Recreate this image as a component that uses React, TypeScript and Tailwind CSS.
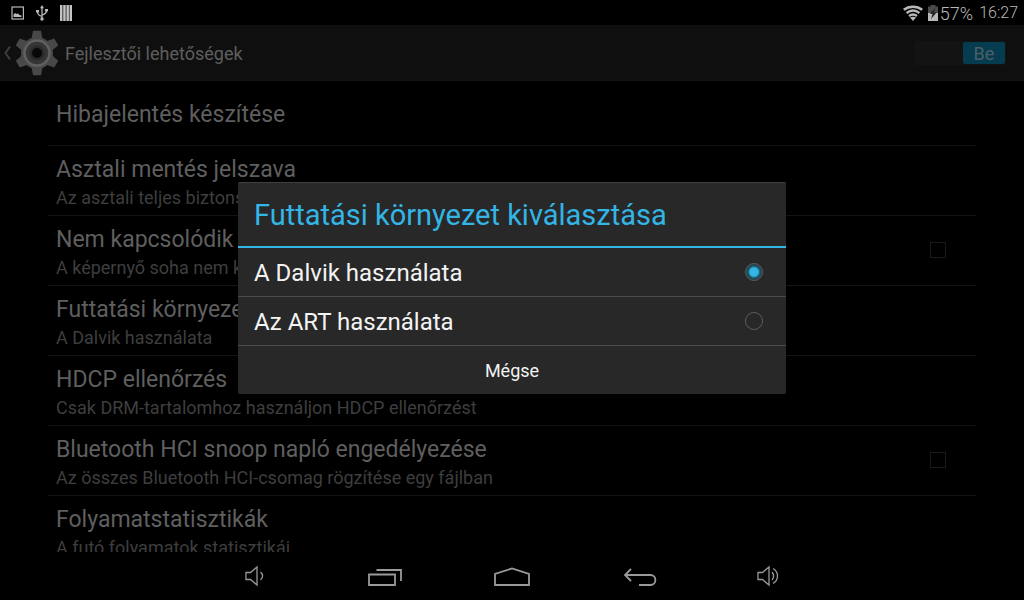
import React, { useState } from "react";

type Setting = { title: string; summary?: string; checkbox?: boolean };

const settings: Setting[] = [
  { title: "Hibajelentés készítése" },
  { title: "Asztali mentés jelszava", summary: "Az asztali teljes biztonsági mentések jelenleg nem védettek" },
  { title: "Nem kapcsolódik ki", summary: "A képernyő soha nem kapcsol ki töltés közben", checkbox: true },
  { title: "Futtatási környezet kiválasztása", summary: "A Dalvik használata" },
  { title: "HDCP ellenőrzés", summary: "Csak DRM-tartalomhoz használjon HDCP ellenőrzést" },
  { title: "Bluetooth HCI snoop napló engedélyezése", summary: "Az összes Bluetooth HCI-csomag rögzítése egy fájlban", checkbox: true },
  { title: "Folyamatstatisztikák", summary: "A futó folyamatok statisztikái" },
];

const runtimes = ["A Dalvik használata", "Az ART használata"];

function StatusBar() {
  return (
    <div className="flex h-[25px] shrink-0 items-center justify-between bg-black pl-[11px] pr-[6px] text-[#b8b8b8]">
      <div className="flex items-center gap-3">
        <svg width="13" height="14" viewBox="0 0 13 14" aria-hidden="true">
          <rect x="1" y="1" width="11.400" height="12" fill="none" stroke="currentColor" strokeWidth="1.200" />
          <path d="M2.500 11V8.500L4 7l1.500 1L7 7.500 8.500 9l2 .5V11z" fill="currentColor" />
        </svg>
        <svg width="12" height="16" viewBox="0 0 12 16" fill="none" stroke="currentColor" strokeWidth="1.300" aria-hidden="true">
          <path d="M6 2v12M6 11.500C2.500 10.500 1.500 9.500 1.500 6.500M6 10c3-.8 4.500-1.500 4.500-4.500" />
          <path d="M6 0L8 3.200H4zM0 5h3v2.500H0zM9 4h3v2.500H9z" fill="currentColor" stroke="none" />
          <circle cx="6" cy="14" r="1.700" fill="currentColor" stroke="none" />
        </svg>
        <svg width="12" height="16" viewBox="0 0 12 16" fill="#c4c4c4" aria-hidden="true">
          <path d="M0 0h2.500v16H0zM3.200 0h2.500v16H3.200zM6.400 0h2.500v16H6.400zM9.500 0H12v16H9.500z" />
        </svg>
      </div>
      <div className="flex items-center">
        <svg width="20" height="16" viewBox="0 0 20 16" fill="none" stroke="currentColor" aria-hidden="true">
          <path d="M.8 4.800C6 .6 14 .6 19.200 4.800" strokeWidth="2.500" />
          <path d="M3.600 8C7.500 5 12.500 5 16.400 8" strokeWidth="2.400" />
          <path d="M6 11c2.400-1.800 5.600-1.800 8 0" strokeWidth="2.300" />
          <path d="M10 16l-3-3.400c1.800-1.300 4.200-1.300 6 0z" fill="currentColor" stroke="none" />
        </svg>
        <svg className="ml-1" width="12" height="16" viewBox="0 0 12 16" aria-hidden="true">
          <path d="M3.500 0h5v1.500H11V8H1V1.500h2.500z" fill="#4a4a4a" />
          <path d="M1 8h10v8H1z" fill="#b8b8b8" />
          <path d="M8.500 2.500L3 9h2.500L4 14l5.500-6.500H6.800z" fill="#222" />
        </svg>
        <span className="ml-px pt-0.5 text-lg font-light leading-6">57%</span>
        <span className="ml-[6px] text-base font-light leading-6">16:27</span>
      </div>
    </div>
  );
}

const teeth = [0, 60, 120, 180, 240, 300];

function GearIcon() {
  return (
    <svg width="44" height="46" viewBox="0 0 44 46" aria-hidden="true">
      <g fill="#484848">
        {teeth.map((angle) => (
          <path key={angle} d="M18 .8h8l1.500 8.200h-11z" transform={`rotate(${angle} 22 23)`} />
        ))}
        <circle cx="22" cy="23" r="16" />
      </g>
      <circle cx="22" cy="23" r="12.500" fill="#353535" stroke="#606060" strokeWidth="2.500" />
      <circle cx="22" cy="23" r="7.500" fill="#2a2a2a" />
      <circle cx="22" cy="23" r="5" fill="#080808" />
    </svg>
  );
}

function Header() {
  return (
    <header className="flex h-14 shrink-0 items-center border-b border-[#121212] bg-[#0f0f0f] pl-1 pr-[18px]">
      <button type="button" aria-label="Vissza" className="flex items-center gap-1">
        <svg width="7" height="14" viewBox="0 0 7 14" fill="none" stroke="#3c3c3c" strokeWidth="2" aria-hidden="true">
          <path d="M6 .5L1.500 7 6 13.500" />
        </svg>
        <GearIcon />
      </button>
      <h1 className="ml-[6px] flex-1 pt-0.5 text-lg leading-6 text-[#5e5e5e]">Fejlesztői lehetőségek</h1>
      <button type="button" role="switch" aria-checked="true" aria-label="Fejlesztői lehetőségek" className="flex h-6 w-[92px] justify-end bg-[#131313] p-px">
        <span className="h-[22px] w-[42px] rounded-[2px] bg-[#053c50] text-center text-lg leading-6 text-[#4c5f66]">Be</span>
      </button>
    </header>
  );
}

function SettingRow({ title, summary, checkbox }: Setting) {
  const text = (
    <span className="block min-w-0 flex-1 pb-[5px] pt-2">
      <span className="block truncate text-[23px] leading-8 text-[#5f5f5f]">{title}</span>
      {summary && <span className="block truncate text-lg leading-6 text-[#3e3e3e]">{summary}</span>}
    </span>
  );
  if (checkbox) {
    return (
      <label className="flex h-[70px] items-center border-b border-[#141414] pl-2 pr-[30px]">
        {text}
        <input type="checkbox" className="mb-0.5 size-4 appearance-none border border-[#191919]" />
      </label>
    );
  }
  return (
    <button
      type="button"
      className={`flex w-full items-center border-b border-[#141414] px-2 text-left ${summary ? "h-[70px]" : "h-[65px]"}`}
    >
      {text}
    </button>
  );
}

function RuntimeDialog() {
  const [selected, setSelected] = useState(0);
  return (
    <div className="absolute inset-x-0 bottom-[49px] top-[25px] flex items-center justify-center">
      <div role="dialog" aria-labelledby="dialog-title" className="w-[548px] max-w-full rounded-[2px] bg-[#282828] text-[#f3f3f3]">
        <h2 id="dialog-title" className="flex h-[66px] items-center rounded-t-[2px] border-b-2 border-t border-b-[#33b5e5] border-t-[#404040] px-4 text-[29px] leading-10 text-[#33b5e5]">
          Futtatási környezet kiválasztása
        </h2>
        {runtimes.map((name, index) => (
          <label key={name} className="flex h-[49px] items-center justify-between border-b border-[#4c4c4c] pl-4 pr-[23px] text-2xl leading-8">
            <span className="pt-0.5">{name}</span>
            <input
              type="radio"
              name="runtime"
              checked={selected === index}
              onChange={() => setSelected(index)}
              className="size-[18px] appearance-none rounded-full border border-[#5c5c5c] checked:bg-[radial-gradient(circle,#33b5e5_0_4px,#1b5468_6px,#243c45_8px,#282828_9px)]"
            />
          </label>
        ))}
        <button type="button" className="h-12 w-full pt-0.5 text-lg leading-6">Mégse</button>
      </div>
    </div>
  );
}

function NavBar() {
  const button = "flex h-12 w-32 items-center justify-center";
  return (
    <nav className="flex h-12 shrink-0 items-center justify-center bg-black text-[#9a9a9a]">
      <button type="button" aria-label="Halkítás" className={button}>
        <svg width="22" height="22" viewBox="0 0 22 22" fill="none" stroke="currentColor" strokeWidth="1.300" aria-hidden="true">
          <path d="M1 7.500h4.500L12 2v18l-6.500-5.500H1zM15.500 7c2.800 2.500 2.800 5.500 0 8" />
        </svg>
      </button>
      <button type="button" aria-label="Legutóbbi" className={button}>
        <svg width="36" height="20" viewBox="0 0 36 20" fill="none" stroke="currentColor" strokeWidth="1.800" aria-hidden="true">
          <path d="M3 8.500h26V19H3zM10.500 4H35v11" />
        </svg>
      </button>
      <button type="button" aria-label="Kezdőlap" className={button}>
        <svg width="36" height="20" viewBox="0 0 36 20" fill="none" stroke="currentColor" strokeWidth="1.800" aria-hidden="true">
          <path d="M1 19V8L18 2.500 35 8v11z" />
        </svg>
      </button>
      <button type="button" aria-label="Vissza" className={button}>
        <svg width="34" height="20" viewBox="0 0 34 20" fill="none" stroke="currentColor" strokeWidth="1.800" aria-hidden="true">
          <path d="M8 3L2 9l6 6M2 9h25.500c6.500 0 6.500 10 0 10H16" />
        </svg>
      </button>
      <button type="button" aria-label="Hangosítás" className={button}>
        <svg width="22" height="22" viewBox="0 0 22 22" fill="none" stroke="currentColor" strokeWidth="1.300" aria-hidden="true">
          <path d="M1 7.500h4.500L12 2v18l-6.500-5.500H1zM15 7c2 2.500 2 5.500 0 8M16 3.500c6 3.500 6 11.500 0 15" />
        </svg>
      </button>
    </nav>
  );
}

export default function App() {
  return (
    <div className="relative flex h-screen flex-col overflow-hidden bg-black font-[Roboto,sans-serif]">
      <StatusBar />
      <Header />
      <main className="min-h-0 flex-1 overflow-hidden px-12">
        {settings.map((setting) => (
          <SettingRow key={setting.title} {...setting} />
        ))}
      </main>
      <NavBar />
      <RuntimeDialog />
    </div>
  );
}
